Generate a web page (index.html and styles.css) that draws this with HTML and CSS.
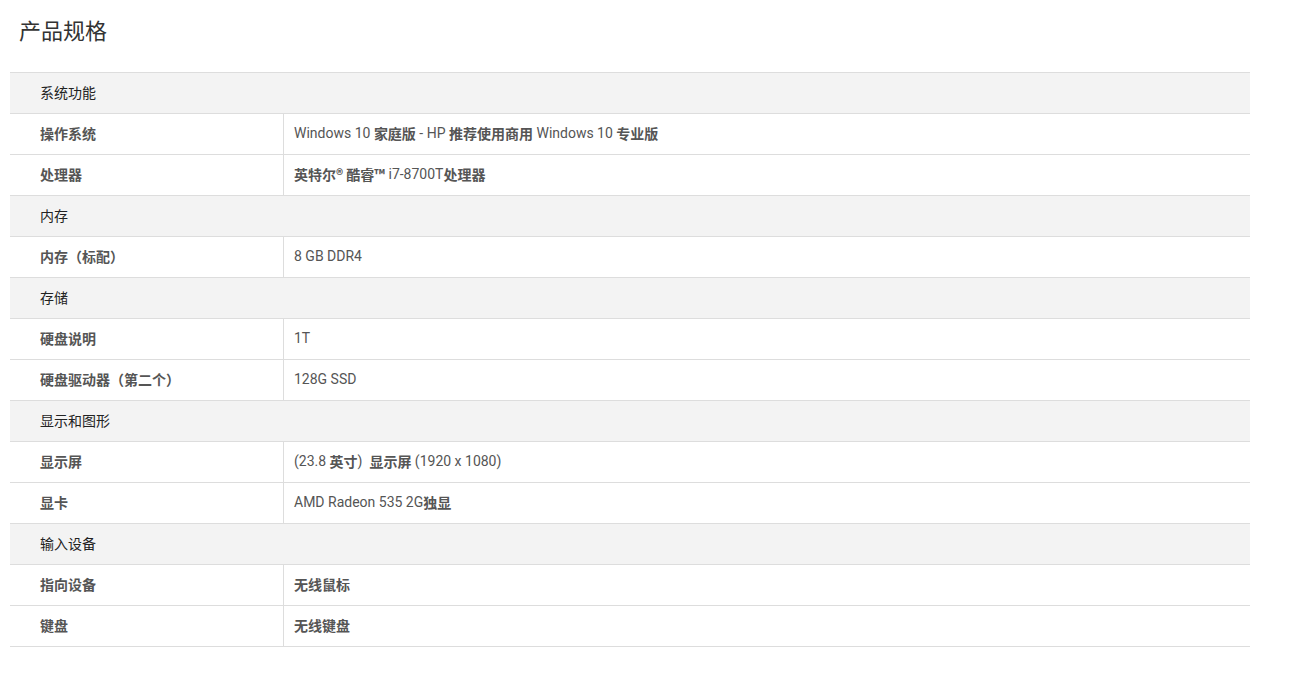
FILE: index.html
```html
<!DOCTYPE html>
<html lang="zh-CN">
<head>
<meta charset="utf-8">
<title>产品规格</title>
<link rel="stylesheet" href="styles.css">
</head>
<body>
<div class="page">
  <h2 class="title">产品规格</h2>
  <div class="specs">
    <div class="section">系统功能</div>
    <div class="row"><div class="label">操作系统</div><div class="value">Windows 10 <b>家庭版</b> - HP <b>推荐使用商用</b> Windows 10 <b>专业版</b></div></div>
    <div class="row"><div class="label">处理器</div><div class="value"><b>英特尔® 酷睿™</b> i7-8700T<b>处理器</b></div></div>
    <div class="section">内存</div>
    <div class="row"><div class="label">内存（标配）</div><div class="value">8 GB DDR4</div></div>
    <div class="section">存储</div>
    <div class="row"><div class="label">硬盘说明</div><div class="value">1T</div></div>
    <div class="row"><div class="label">硬盘驱动器（第二个）</div><div class="value">128G SSD</div></div>
    <div class="section">显示和图形</div>
    <div class="row"><div class="label">显示屏</div><div class="value">(23.8 <b>英寸</b>) &nbsp;<b>显示屏</b> (1920 x 1080)</div></div>
    <div class="row"><div class="label">显卡</div><div class="value">AMD Radeon 535 2G<b>独显</b></div></div>
    <div class="section">输入设备</div>
    <div class="row"><div class="label">指向设备</div><div class="value"><b>无线鼠标</b></div></div>
    <div class="row"><div class="label">键盘</div><div class="value"><b>无线键盘</b></div></div>
  </div>
</div>
</body>
</html>
```
FILE: styles.css
```css
html, body {
  margin: 0;
  padding: 0;
  background: #fff;
}
body {
  font-family: "Noto Sans CJK SC", sans-serif;
  color: #555;
}
.page {
  padding: 0 0 0 10px;
  width: 1240px;
}
.title {
  margin: 0;
  padding: 13px 0 0 9px;
  height: 72px;
  box-sizing: border-box;
  font-size: 22px;
  font-weight: 400;
  line-height: 32px;
  color: #333;
  font-family: "Noto Sans CJK SC", sans-serif;
}
.specs {
  border-top: 1px solid #ddd;
}
.section {
  height: 40px;
  box-sizing: border-box;
  border-bottom: 1px solid #ddd;
  background: #f3f3f3;
  padding: 0 0 3px 30px;
  display: flex;
  align-items: center;
  font-size: 14px;
  color: #222;
  font-family: "Noto Sans CJK SC", sans-serif;
  height: 41px;
}
.row {
  display: grid;
  grid-template-columns: 274px 1fr;
  height: 41px;
  box-sizing: border-box;
  border-bottom: 1px solid #ddd;
}
.label {
  border-right: 1px solid #ddd;
  padding: 0 0 3px 30px;
  display: flex;
  align-items: center;
  font-size: 14px;
  font-weight: 700;
  color: #555;
  font-family: "Noto Sans CJK SC", sans-serif;
}
.value {
  padding: 0 0 3px 10px;
  display: flex;
  align-items: center;
  white-space: pre;
  font-size: 14px;
  color: #555;
  font-family: Roboto, "Noto Sans CJK SC", sans-serif;
}
.value b {
  font-weight: 700;
  font-family: "Noto Sans CJK SC", sans-serif;
}
```
